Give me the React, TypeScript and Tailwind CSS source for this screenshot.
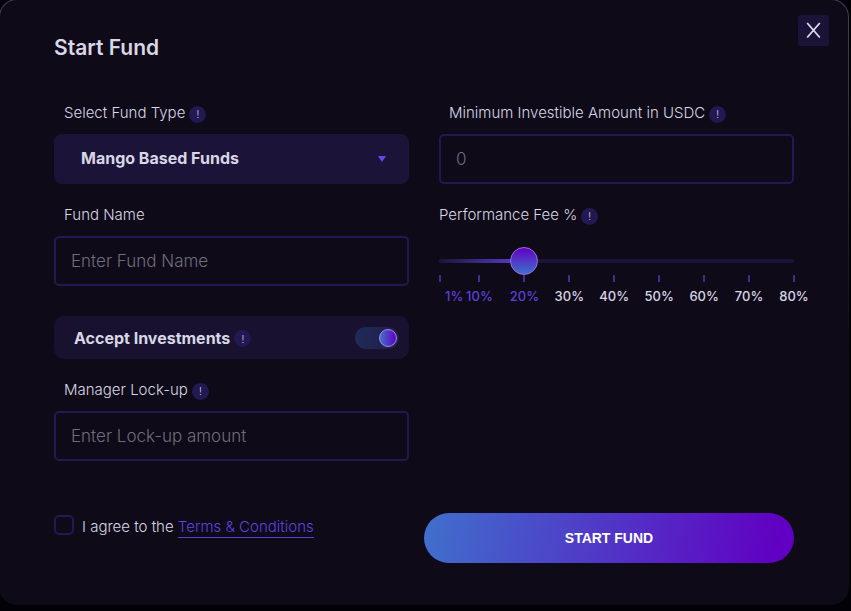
import { useState } from "react";
import type { InputHTMLAttributes } from "react";

const MIN_FEE = 1;
const MAX_FEE = 80;
const FEE_MARKS = [1, 10, 20, 30, 40, 50, 60, 70, 80];

function InfoBadge({ about }: { about: string }) {
  return (
    <button
      type="button"
      aria-label={`About ${about}`}
      className="mt-0.5 flex h-[17px] w-[17px] shrink-0 items-center justify-center rounded-full bg-[#231952] text-[10px] leading-none font-light text-[#dcd8ec]"
    >
      !
    </button>
  );
}

interface FieldLabelProps {
  id: string;
  text: string;
  info?: boolean;
  flush?: boolean;
}

function FieldLabel({ id, text, info, flush }: FieldLabelProps) {
  return (
    <div className={`mb-[11px] flex h-5 items-center gap-1 ${flush ? "" : "pl-2.5"}`}>
      <label htmlFor={id} className="text-[15px] leading-5 font-light whitespace-nowrap">
        {text}
      </label>
      {info && <InfoBadge about={text} />}
    </div>
  );
}

function TextField(props: InputHTMLAttributes<HTMLInputElement>) {
  return (
    <input
      type="text"
      className="block h-[50px] w-full rounded-[5px] border-2 border-[#231952] bg-transparent px-[15px] text-[17px] font-light text-[#d9d6e6] outline-none placeholder:text-[#706d7b] focus:border-[#5b40d6]"
      {...props}
    />
  );
}

function FeeSlider() {
  const [fee, setFee] = useState(20);
  const filled = ((fee - MIN_FEE) / (MAX_FEE - MIN_FEE)) * 100;

  return (
    <div className="pt-[11px]">
      <div className="grid items-center">
        <div className="col-start-1 row-start-1 h-1 overflow-hidden rounded-sm bg-[#1b1438]">
          <div
            className="h-full bg-linear-to-r/srgb from-[#1b1438] to-[#5b40d6]"
            style={{ width: `${filled}%` }}
          />
        </div>
        <input
          id="performance-fee"
          type="range"
          min={MIN_FEE}
          max={MAX_FEE}
          value={fee}
          onChange={(event) => setFee(Number(event.target.value))}
          className="col-start-1 row-start-1 -mx-3.5 h-7 cursor-pointer appearance-none bg-transparent outline-none [&::-webkit-slider-thumb]:h-7 [&::-webkit-slider-thumb]:w-7 [&::-webkit-slider-thumb]:appearance-none [&::-webkit-slider-thumb]:rounded-full [&::-webkit-slider-thumb]:border [&::-webkit-slider-thumb]:border-solid [&::-webkit-slider-thumb]:border-[#9a6fe0] [&::-webkit-slider-thumb]:bg-linear-to-b/srgb [&::-webkit-slider-thumb]:from-[#6100c2] [&::-webkit-slider-thumb]:to-[#4070cc]"
        />
      </div>
      <div className="flex">
        {FEE_MARKS.map((mark, index) => (
          <div
            key={mark}
            className="flex basis-0 last:flex-none"
            style={{ flexGrow: (FEE_MARKS[index + 1] ?? mark) - mark }}
          >
            <div className={`flex w-0 flex-col ${index === 0 ? "items-start" : "items-center"}`}>
              <span className="h-[7px] w-0.5 shrink-0 bg-[#3f2d96]" />
              <span
                className={`mt-1 text-[13px] leading-5 font-medium ${index === 0 ? "pl-1.5" : ""} ${mark <= fee ? "text-[#5b40d6]" : "text-[#d9d6e6]"}`}
              >
                {mark}%
              </span>
            </div>
          </div>
        ))}
      </div>
    </div>
  );
}

function AcceptSwitch() {
  const [on, setOn] = useState(true);
  return (
    <div className="mt-[30px] flex h-[43px] items-center justify-between rounded-[10px] bg-[#181230] pr-2.5 pl-5">
      <div className="flex items-center gap-1">
        <label htmlFor="accept-investments" className="text-base leading-5 font-bold">
          Accept Investments
        </label>
        <InfoBadge about="Accept Investments" />
      </div>
      <input
        id="accept-investments"
        type="checkbox"
        role="switch"
        checked={on}
        onChange={(event) => setOn(event.target.checked)}
        className="flex h-[22px] w-11 cursor-pointer appearance-none items-center rounded-full bg-linear-to-r from-[#202a58] to-[#1d1f48] px-0.5 before:h-[18px] before:w-[18px] before:rounded-full before:border before:border-[#a58be8] before:bg-linear-to-r/srgb before:from-[#4070cc] before:to-[#6100c2] before:content-[''] checked:justify-end"
      />
    </div>
  );
}

export default function App() {
  return (
    <main className="min-h-screen overflow-hidden bg-[#020107] pr-0.5 font-['Inter','Liberation_Sans',sans-serif] text-[#d9d6e6]">
      <div className="-mt-px -ml-px rounded-[18px] bg-linear-to-b from-[#454252] to-[#0e0a17] to-60% p-px">
        <form
          className="rounded-[17px] bg-[#0e0a17] pb-[41px]"
          onSubmit={(event) => event.preventDefault()}
        >
          <header className="flex items-start justify-between pt-[15px] pr-[19px] pl-[54px]">
            <h1 className="pt-[19px] text-[21px] leading-7 font-semibold">Start Fund</h1>
            <button
              type="button"
              aria-label="Close"
              className="flex h-[31px] w-[31px] items-center justify-center rounded-[3px] bg-[#1b1438]"
            >
              <svg width="15" height="17" viewBox="0 0 15 17" fill="none" stroke="#dcd8ec" strokeWidth="1.8">
                <path d="M1.200 1 13.800 15.500M13.800 1 1.200 15.500" />
              </svg>
            </button>
          </header>

          <div className="pr-[54px] pl-[54px]">
            <div className="mt-[41px] grid grid-cols-2 gap-[30px]">
              <div>
                <FieldLabel id="fund-type" text="Select Fund Type" info />
                <div className="grid items-center">
                  <select
                    id="fund-type"
                    className="col-start-1 row-start-1 h-[50px] w-full appearance-none rounded-lg bg-[#1b1438] pr-10 pb-0.5 pl-[27px] text-base font-bold outline-none"
                  >
                    <option>Mango Based Funds</option>
                  </select>
                  <svg
                    width="8"
                    height="6"
                    viewBox="0 0 8 6"
                    className="pointer-events-none col-start-1 row-start-1 mr-[23px] justify-self-end"
                    aria-hidden="true"
                  >
                    <path d="M0 0h8L4 6z" fill="#6547f0" />
                  </svg>
                </div>

                <div className="mt-[21px]">
                  <FieldLabel id="fund-name" text="Fund Name" />
                  <TextField id="fund-name" placeholder="Enter Fund Name" />
                </div>

                <AcceptSwitch />

                <div className="mt-[21px]">
                  <FieldLabel id="lock-up" text="Manager Lock-up" info />
                  <TextField id="lock-up" placeholder="Enter Lock-up amount" />
                </div>
              </div>

              <div>
                <FieldLabel id="min-amount" text="Minimum Investible Amount in USDC" info />
                <TextField id="min-amount" inputMode="decimal" placeholder="0" />

                <div className="mt-[21px]">
                  <FieldLabel id="performance-fee" text="Performance Fee %" info flush />
                  <FeeSlider />
                </div>
              </div>
            </div>

            <div className="mt-[52px] flex items-start">
              <div className="flex flex-1 items-start gap-2 pt-0.5">
                <input
                  id="agree"
                  type="checkbox"
                  className="h-5 w-5 appearance-none rounded-[5px] border-2 border-[#231952] checked:bg-[#5b40d6]"
                />
                <p className="pt-0.5 text-[15px] leading-5 font-light whitespace-nowrap">
                  <label htmlFor="agree">I agree to the </label>
                  <a
                    href="#terms"
                    className="inline-block border-b border-b-[#5b40d6] text-[#5f43e0]"
                  >
                    Terms &amp; Conditions
                  </a>
                </p>
              </div>
              <button
                type="submit"
                className="h-[50px] w-1/2 rounded-full bg-linear-100/srgb from-[#4070cc] to-[#6100c2] to-95% font-['Liberation_Sans',Arial,sans-serif] text-sm font-bold text-white"
              >
                START FUND
              </button>
            </div>
          </div>
        </form>
      </div>
    </main>
  );
}
